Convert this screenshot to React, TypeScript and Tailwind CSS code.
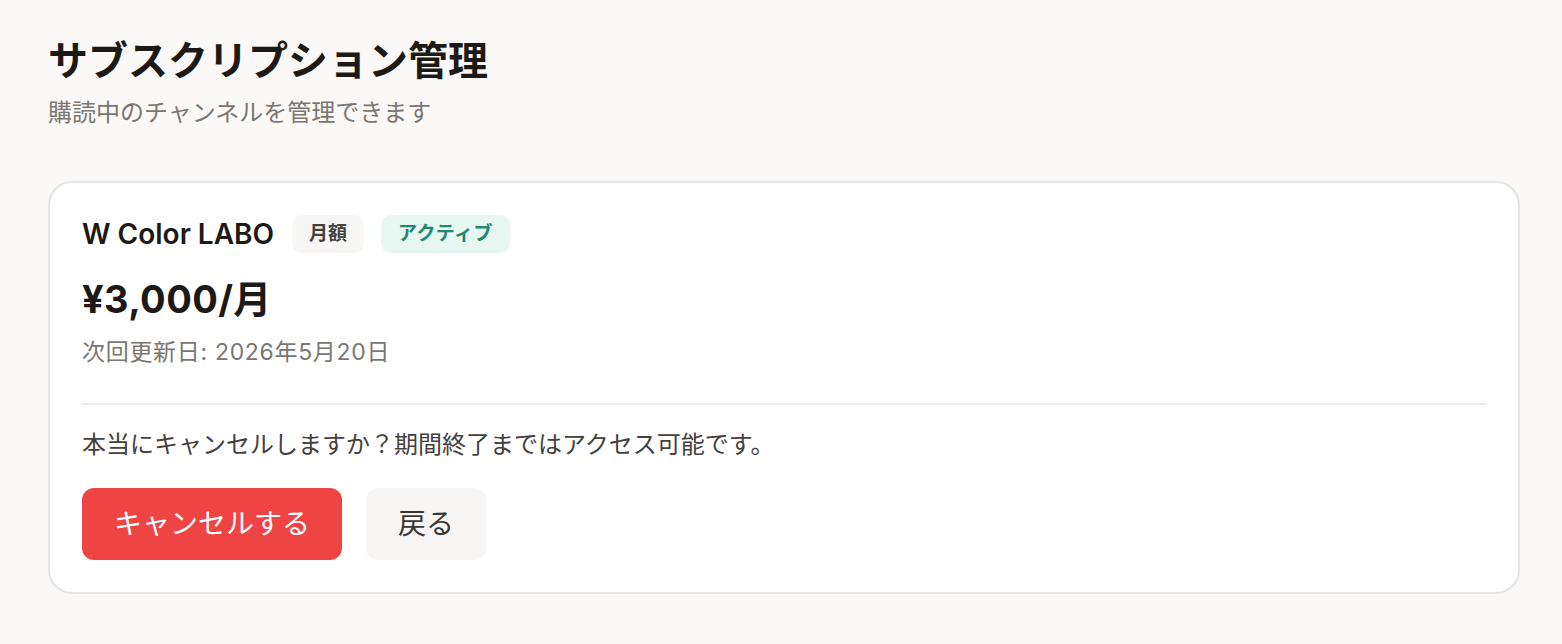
import React from "react";

const font = {
  fontFamily:
    '"Inter", "Noto Sans CJK JP", "Noto Sans", sans-serif',
};

export default function App() {
  return (
    <div
      className="min-h-screen w-full bg-[#faf9f8] px-[48px] pt-[36px] pb-[48px]"
      style={font}
    >
      <h1 className="text-[40px] leading-[50px] font-bold text-[#1c1917]">
        サブスクリプション管理
      </h1>
      <p className="mt-[11px] text-[24px] leading-[32px] text-[#7a7672]">
        購読中のチャンネルを管理できます
      </p>

      <div className="mt-[52px] w-[1472px] rounded-[24px] border-2 border-[#e7e5e4] bg-white p-[32px]">
        <div className="flex items-center">
          <span className="mr-[18px] text-[28px] leading-[38px] font-semibold text-[#1c1917]">
            W Color LABO
          </span>
          <span className="flex h-[38px] items-center rounded-[10px] bg-[#f7f6f4] px-[17px] text-[19px] font-bold text-[#44403c]">
            月額
          </span>
          <span className="ml-[17px] flex h-[38px] items-center rounded-[10px] bg-[#e6f6f1] px-[17px] text-[19px] font-bold tracking-[0.02em] text-[#24876f]">
            アクティブ
          </span>
        </div>
        <div className="mt-[24px] text-[38px] leading-[44px] font-bold tracking-[0.01em] text-[#1c1917]">
          ¥3,000/月
        </div>
        <div className="mt-[16px] text-[23px] leading-[30px] tracking-[0.03em] text-[#7a7672]">
          次回更新日: 2026年5月20日
        </div>

        <div className="mt-[36px] border-t-2 border-[#eeecea] pt-[24px]">
          <p className="text-[24px] leading-[32px] text-[#44403c]">
            本当にキャンセルしますか？期間終了まではアクセス可能です。
          </p>
          <div className="mt-[27px] flex gap-[24px]">
            <button className="flex h-[72px] w-[260px] items-center justify-center rounded-[12px] bg-[#ef4444] text-[28px] text-white">
              キャンセルする
            </button>
            <button className="flex h-[72px] w-[120px] items-center justify-center rounded-[12px] bg-[#f7f6f4] text-[28px] text-[#3a3634]">
              戻る
            </button>
          </div>
        </div>
      </div>
    </div>
  );
}
